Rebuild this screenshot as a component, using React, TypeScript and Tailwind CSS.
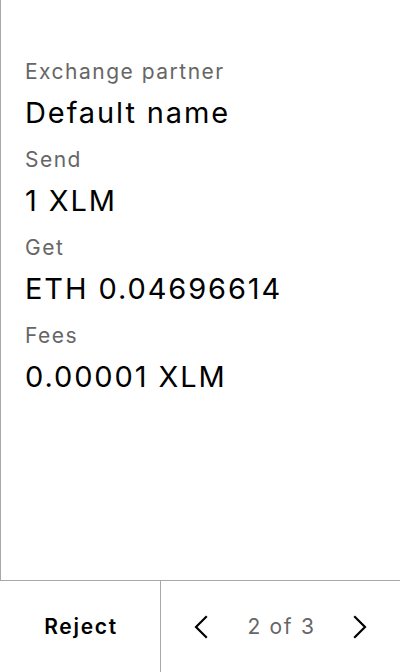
import React from 'react';

const rows = [
  { label: 'Exchange partner', value: 'Default name' },
  { label: 'Send', value: '1 XLM' },
  { label: 'Get', value: 'ETH 0.04696614' },
  { label: 'Fees', value: '0.00001 XLM' },
];

const Chevron: React.FC<{ dir: 'left' | 'right' }> = ({ dir }) => (
  <svg width="14" height="24" viewBox="0 0 14 24" fill="none">
    <polyline
      points={dir === 'left' ? '12,2 2,12 12,22' : '2,2 12,12 2,22'}
      stroke="#000"
      strokeWidth="2.2"
      strokeLinecap="square"
      strokeLinejoin="miter"
    />
  </svg>
);

const App: React.FC = () => {
  return (
    <div className="w-[400px] h-[672px] flex flex-col bg-white font-['Inter',sans-serif] text-black">
      <div className="flex-1 border-l border-[#a8a8a8] pt-[58px] px-6">
        {rows.map((r) => (
          <div key={r.label} className="mb-[15px]">
            <p className="text-[21px] leading-[28px] tracking-[1.5px] text-[#666] mb-[9px]">{r.label}</p>
            <p className="text-[29px] leading-[36px] tracking-[1.9px]">{r.value}</p>
          </div>
        ))}
      </div>

      <div className="h-[92px] flex border-t border-[#a8a8a8]">
        <button className="w-[160px] flex items-center justify-center text-[21px] font-semibold tracking-[1.7px] pl-[2px]">
          Reject
        </button>
        <div className="flex-1 border-l border-[#a8a8a8] grid grid-cols-3 items-center">
          <div className="flex justify-center">
            <Chevron dir="left" />
          </div>
          <span className="text-center text-[21px] tracking-[1.7px] text-[#666] whitespace-nowrap pl-[2px]">2 of 3</span>
          <div className="flex justify-center">
            <Chevron dir="right" />
          </div>
        </div>
      </div>
    </div>
  );
};

export default App;
